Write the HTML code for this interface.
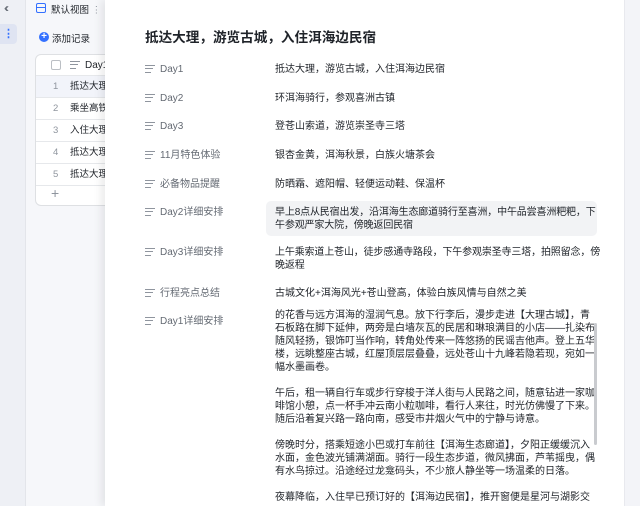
<!DOCTYPE html>
<html><head><meta charset="utf-8"><style>
*{margin:0;padding:0;box-sizing:border-box}
body{width:640px;height:506px;overflow:hidden;position:relative;background:#f5f6fa;font-family:"Liberation Sans","Noto Sans CJK SC",sans-serif;color:#1f2329}
.side{position:absolute;left:0;top:0;width:26px;height:506px;background:#eef0f5;border-right:1px solid #e3e5ea}
.tbl{position:absolute;left:26px;top:0;width:90px;height:506px;background:#f6f7fa}
.card{position:absolute;left:35px;top:54px;width:90px;height:152px;background:#fff;border:1px solid #dee0e3;border-radius:6px;overflow:hidden}
.row{height:22px;border-bottom:1px solid #e6e8eb;font-size:9.5px;line-height:21px;position:relative}
.row .n{position:absolute;left:17px;color:#8f959e}
.row .t{position:absolute;left:34px}
.modal{position:absolute;left:105px;top:0;width:519px;height:506px;background:#fff;box-shadow:-4px 0 8px rgba(0,0,0,.08)}
.strip{position:absolute;left:624px;top:0;width:16px;height:506px;background:#f3f4f8;border-left:1px solid #e8e9ee}
h1{position:absolute;left:40px;top:26px;font-size:13.6px;font-weight:bold;color:#1f2329}
.lab{position:absolute;left:40px;font-size:10px;color:#646a73;line-height:13px}
.lab i{display:inline-block;width:10px;height:8px;margin-right:5px;vertical-align:-1px;background:linear-gradient(#8f959e,#8f959e) 0 0/10px 1.2px no-repeat,linear-gradient(#8f959e,#8f959e) 0 3.4px/8px 1.2px no-repeat,linear-gradient(#8f959e,#8f959e) 0 6.8px/6px 1.2px no-repeat}
.val{position:absolute;left:170px;width:322px;font-size:10px;line-height:13px;color:#1f2329}
.nw{white-space:nowrap;letter-spacing:-0.15px}
</style></head><body>
<div class="side">
<div style="position:absolute;left:4px;top:1px;font-size:12px;color:#646a73;letter-spacing:-3px">‹‹</div>
<div style="position:absolute;left:0;top:24px;width:17px;height:20px;background:#dfe4f2;border-radius:0 4px 4px 0;color:#3370ff;font-size:11px;text-align:center;line-height:20px;font-weight:bold">⋮</div>
</div>
<div class="tbl">
<div style="position:absolute;left:10px;top:3px;width:10px;height:10px;border:1.3px solid #3370ff;border-radius:2px;background:linear-gradient(#3370ff,#3370ff) 0 3px/10px 1px no-repeat"></div>
<div style="position:absolute;left:25px;top:2px;font-size:9.5px;color:#1f2329">默认视图 <span style="color:#8f959e">⋮</span></div>
<div style="position:absolute;left:13px;top:32px;width:10px;height:10px;border-radius:50%;background:#3370ff;color:#fff;font-size:10px;line-height:10px;text-align:center;font-weight:bold">+</div>
<div style="position:absolute;left:26px;top:31px;font-size:9.5px">添加记录</div>
</div>
<div class="card">
<div class="row" style="height:21px"><span style="position:absolute;left:15px;top:5px;width:10px;height:10px;border:1px solid #bbbfc4;border-radius:2px"></span><span class="lab" style="left:34px;top:4px;color:#1f2329"><i></i>Day1</span></div>
<div class="row" style="background:#f2f4fa"><span class="n">1</span><span class="t">抵达大理</span></div>
<div class="row"><span class="n">2</span><span class="t">乘坐高铁</span></div>
<div class="row"><span class="n">3</span><span class="t">入住大理</span></div>
<div class="row"><span class="n">4</span><span class="t">抵达大理</span></div>
<div class="row"><span class="n">5</span><span class="t">抵达大理</span></div>
<div style="position:absolute;left:15px;top:130px;font-size:14px;color:#8f959e">+</div>
</div>
<div class="modal">
<h1>抵达大理，游览古城，入住洱海边民宿</h1>
<div class="lab" style="top:63px"><i></i>Day1</div><div class="val" style="top:63px">抵达大理，游览古城，入住洱海边民宿</div>
<div class="lab" style="top:92px"><i></i>Day2</div><div class="val" style="top:92px">环洱海骑行，参观喜洲古镇</div>
<div class="lab" style="top:120px"><i></i>Day3</div><div class="val" style="top:120px">登苍山索道，游览崇圣寺三塔</div>
<div class="lab" style="top:149px"><i></i>11月特色体验</div><div class="val" style="top:149px">银杏金黄，洱海秋景，白族火塘茶会</div>
<div class="lab" style="top:178px"><i></i>必备物品提醒</div><div class="val" style="top:178px">防晒霜、遮阳帽、轻便运动鞋、保温杯</div>
<div class="lab" style="top:206px"><i></i>Day2详细安排</div>
<div style="position:absolute;left:161px;top:201px;width:331px;height:35px;background:#f2f3f5;border-radius:5px"></div>
<div class="val nw" style="top:206px">早上8点从民宿出发，沿洱海生态廊道骑行至喜洲，中午品尝喜洲粑粑，下<br>午参观严家大院，傍晚返回民宿</div>
<div class="lab" style="top:246px"><i></i>Day3详细安排</div><div class="val nw" style="top:246px">上午乘索道上苍山，徒步感通寺路段，下午参观崇圣寺三塔，拍照留念，傍<br>晚返程</div>
<div class="lab" style="top:287px"><i></i>行程亮点总结</div><div class="val" style="top:287px">古城文化+洱海风光+苍山登高，体验白族风情与自然之美</div>
<div class="lab" style="top:315px"><i></i>Day1详细安排</div>
<div class="val" style="top:309px">的花香与远方洱海的湿润气息。放下行李后，漫步走进【大理古城】，青石板路在脚下延伸，两旁是白墙灰瓦的民居和琳琅满目的小店——扎染布随风轻扬，银饰叮当作响，转角处传来一阵悠扬的民谣吉他声。登上五华楼，远眺整座古城，红屋顶层层叠叠，远处苍山十九峰若隐若现，宛如一幅水墨画卷。<br><br>午后，租一辆自行车或步行穿梭于洋人街与人民路之间，随意钻进一家咖啡馆小憩，点一杯手冲云南小粒咖啡，看行人来往，时光仿佛慢了下来。随后沿着复兴路一路向南，感受市井烟火气中的宁静与诗意。<br><br>傍晚时分，搭乘短途小巴或打车前往【洱海生态廊道】，夕阳正缓缓沉入水面，金色波光铺满湖面。骑行一段生态步道，微风拂面，芦苇摇曳，偶有水鸟掠过。沿途经过龙龛码头，不少旅人静坐等一场温柔的日落。<br><br>夜幕降临，入住早已预订好的【洱海边民宿】，推开窗便是星河与湖影交</div>
<div style="position:absolute;left:489px;top:323px;width:3px;height:122px;background:#c9cbcf;border-radius:2px"></div>
</div>
<div class="strip"></div>
</body></html>
